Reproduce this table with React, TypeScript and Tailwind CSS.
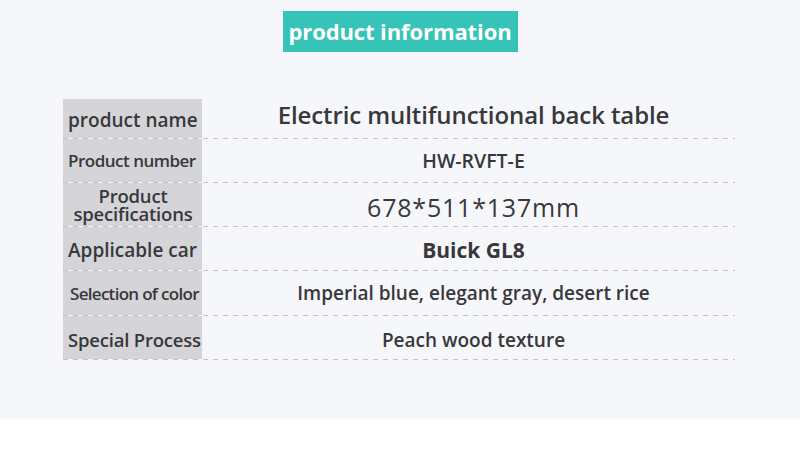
type Row = {
  label: React.ReactNode
  value: string
  h: string
  labelCls: string
  valueCls: string
}

const ROWS: Row[] = [
  {
    label: "product name",
    value: "Electric multifunctional back table",
    h: "h-[39px]",
    labelCls: "text-[19px] pt-[4px]",
    valueCls: "text-[24px] font-semibold pb-[8px] tracking-[-0.1px]",
  },
  {
    label: "Product number",
    value: "HW-RVFT-E",
    h: "h-[43px]",
    labelCls: "text-[17px] tracking-[-0.5px]",
    valueCls: "text-[19.5px] font-semibold",
  },
  {
    label: (
      <span className="flex flex-col items-center -ml-[4px]">
        <span className="block h-[18px] leading-[18px]">Product</span>
        <span className="block h-[18px] leading-[18px]">specifications</span>
      </span>
    ),
    value: "678*511*137mm",
    h: "h-[43px]",
    labelCls: "text-[18.5px] justify-center tracking-[-0.2px] pt-[1px]",
    valueCls: "text-[25px] font-normal pt-[6px] tracking-[0.8px]",
  },
  {
    label: "Applicable car",
    value: "Buick GL8",
    h: "h-[43px]",
    labelCls: "text-[19px] pt-[4px]",
    valueCls: "text-[21px] font-bold pt-[4px]",
  },
  {
    label: "Selection of color",
    value: "Imperial blue, elegant gray, desert rice",
    h: "h-[44px]",
    labelCls: "text-[17px] tracking-[-0.7px] pl-[7px]",
    valueCls: "text-[19px] font-semibold",
  },
  {
    label: "Special Process",
    value: "Peach wood texture",
    h: "h-[43px]",
    labelCls: "text-[18.5px] tracking-[-0.2px] pt-[5px]",
    valueCls: "text-[19px] font-semibold pt-[5px]",
  },
]

function Dashes() {
  return (
    <div className="h-px w-full bg-[linear-gradient(to_right,#c4c4c8_50%,transparent_50%)] bg-[length:10px_1px]" />
  )
}

export default function App() {
  return (
    <div className="w-[800px] h-[459px] bg-white font-['Open_Sans',sans-serif] text-[#38383a]">
      <div className="h-[419px] bg-[#f6f7fa] flex flex-col items-center pt-[11px]">
        <div className="h-[41px] w-[235px] bg-[#36c3b8] text-white flex items-center justify-center text-[22px] font-bold tracking-[-0.1px]">
          product information
        </div>

        {/* spec table: grey label column + centred values, dashed separators */}
        <div className="self-start ml-[63px] mt-[47px] w-[672px] flex flex-col">
          {ROWS.map((r, i) => (
            <div key={i} className="flex flex-col">
              <div className={`flex ${r.h}`}>
                <div
                  className={`w-[139px] shrink-0 bg-[#d5d5d9] flex items-center pl-[5px] font-semibold leading-none whitespace-nowrap ${r.labelCls}`}
                >
                  {r.label}
                </div>
                <div
                  className={`flex-1 flex items-center justify-center pl-[10px] leading-none whitespace-nowrap ${r.valueCls}`}
                >
                  {r.value}
                </div>
              </div>
              <Dashes />
            </div>
          ))}
        </div>
      </div>
    </div>
  )
}
